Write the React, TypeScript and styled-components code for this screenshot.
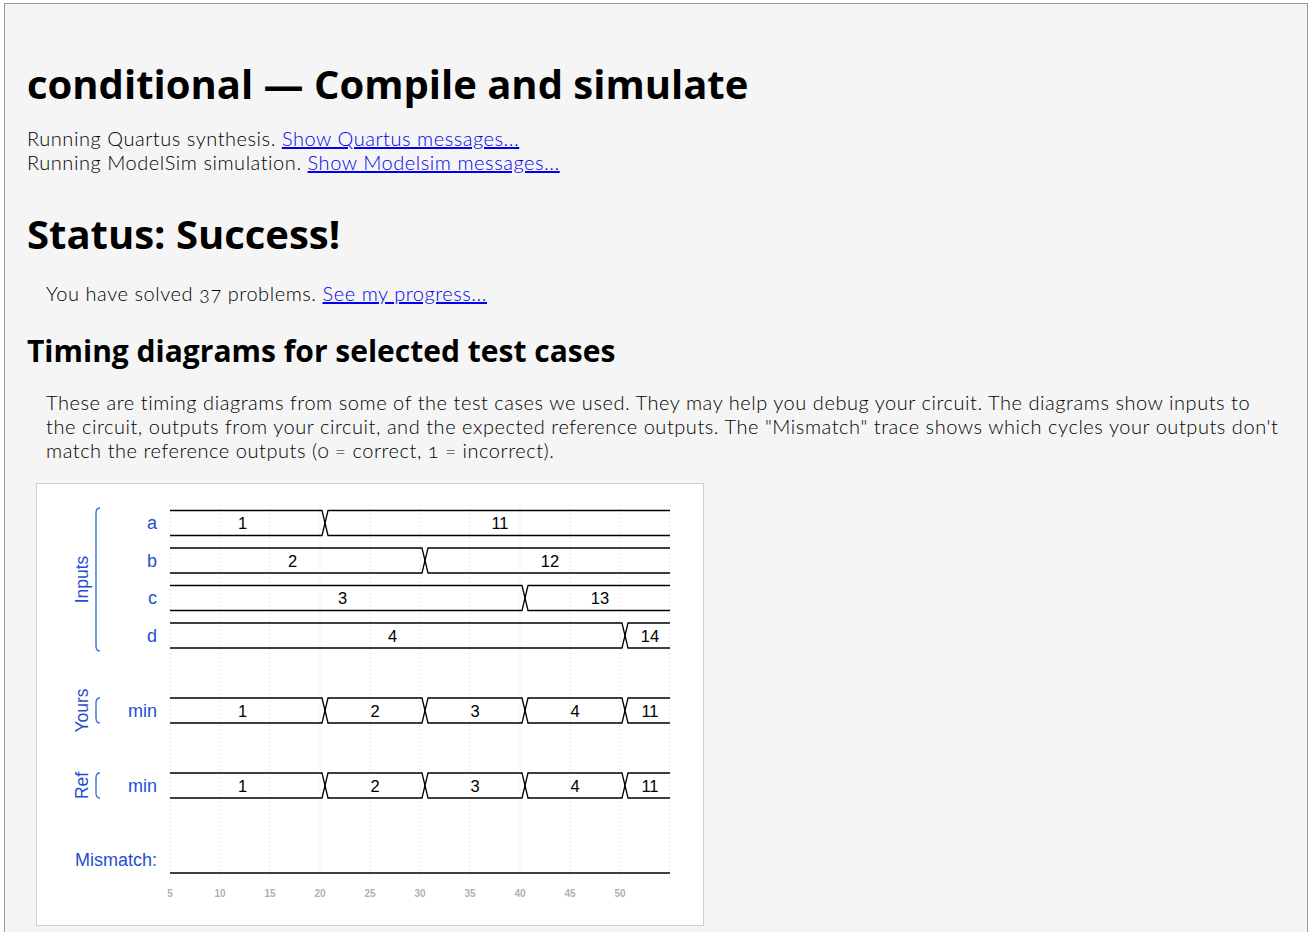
import styled, { createGlobalStyle } from 'styled-components'

const GlobalStyle = createGlobalStyle`
  body {
    margin: 0;
    background: #fff;
    font-family: Lato, "Open Sans", sans-serif;
  }
`

// diagram geometry, in page pixels of the card's inner box
const OX = 37
const OY = 484
const T0 = 5
const PX_PER_T = 10
const X_START = 170
const tx = (t: number) => X_START + (t - T0) * PX_PER_T - OX
const ly = (y: number) => y - OY

type Seg = { to: number | null, label: string }

interface Trace {
  name: string
  y: number
  segs: Seg[]
}

const inputs: Trace[] = [
  { name: 'a', y: 523, segs: [{ to: 20.5, label: '1' }, { to: null, label: '11' }] },
  { name: 'b', y: 560.5, segs: [{ to: 30.5, label: '2' }, { to: null, label: '12' }] },
  { name: 'c', y: 598, segs: [{ to: 40.5, label: '3' }, { to: null, label: '13' }] },
  { name: 'd', y: 635.5, segs: [{ to: 50.5, label: '4' }, { to: null, label: '14' }] }
]

const minSegs: Seg[] = [
  { to: 20.5, label: '1' },
  { to: 30.5, label: '2' },
  { to: 40.5, label: '3' },
  { to: 50.5, label: '4' },
  { to: null, label: '11' }
]

const yours: Trace = { name: 'min', y: 710.5, segs: minSegs }
const ref: Trace = { name: 'min', y: 785.5, segs: minSegs }

function Bus ({ trace }: { trace: Trace }) {
  const h = 12.5
  const top = ly(trace.y) - h
  const bot = ly(trace.y) + h
  const mid = ly(trace.y)
  const d = 3
  let from: number | null = null
  const parts: JSX.Element[] = []
  trace.segs.forEach((s, i) => {
    const xs = from === null ? tx(T0) : tx(from)
    const xe = s.to === null ? tx(55) : tx(s.to)
    // the first and last values run on past the visible window
    const vs = from === null ? tx(4) : xs
    const ve = s.to === null ? tx(55.5) : xe
    const sl = from === null ? 0 : d
    const sr = s.to === null ? 0 : d
    const pts = [
      `${xs},${mid}`,
      `${xs + sl},${top}`,
      `${xe - sr},${top}`,
      `${xe},${mid}`,
      `${xe - sr},${bot}`,
      `${xs + sl},${bot}`
    ]
    const path = from === null
      ? `M${xs},${top} L${pts[2]} L${pts[3]} L${pts[4]} L${xs},${bot}`
      : s.to === null
        ? `M${xe},${top} L${pts[1]} L${pts[0]} L${pts[5]} L${xe},${bot}`
        : `M${pts.join(' L')} Z`
    parts.push(
      <g key={i}>
        <path d={path} fill='none' stroke='#000' strokeWidth={1.3} />
        <ValueText x={(vs + ve) / 2} y={mid + 6}>{s.label}</ValueText>
      </g>
    )
    from = s.to
  })
  return (
    <g>
      <TraceName x={157 - OX} y={mid + 6}>{trace.name}</TraceName>
      {parts}
    </g>
  )
}

function Bracket ({ y1, y2, label }: { y1: number, y2: number, label: string }) {
  const a = ly(y1)
  const b = ly(y2)
  const x = 96 - OX
  return (
    <g>
      <path
        d={`M${x + 4},${a} Q${x},${a} ${x},${a + 5} L${x},${b - 5} Q${x},${b} ${x + 4},${b}`}
        fill='none'
        stroke='#3a6fd8'
        strokeWidth={1.4}
      />
      <GroupText transform={`translate(${82 - OX},${(a + b) / 2}) rotate(-90)`}>{label}</GroupText>
    </g>
  )
}

function TimingDiagram () {
  const ticks = [5, 10, 15, 20, 25, 30, 35, 40, 45, 50, 55]
  return (
    <DiagramCard>
      <svg width={666} height={441} viewBox='0 0 666 441'>
        {ticks.map(t => (
          <line
            key={t}
            x1={tx(t)}
            x2={tx(t)}
            y1={ly(505)}
            y2={ly(880)}
            stroke='#cfcfcf'
            strokeDasharray='1 3'
          />
        ))}
        <Bracket y1={508} y2={651} label='Inputs' />
        <Bracket y1={698} y2={723} label='Yours' />
        <Bracket y1={773} y2={798} label='Ref' />
        {inputs.map(tr => <Bus key={tr.name} trace={tr} />)}
        <Bus trace={yours} />
        <Bus trace={ref} />
        <TraceName x={157 - OX} y={ly(866)}>Mismatch:</TraceName>
        <line x1={tx(5)} x2={tx(55)} y1={ly(873)} y2={ly(873)} stroke='#000' strokeWidth={1.3} />
        {ticks.slice(0, 10).map(t => (
          <AxisText key={t} x={tx(t)} y={ly(897)}>{t}</AxisText>
        ))}
      </svg>
    </DiagramCard>
  )
}

export default function App () {
  return (
    <>
      <GlobalStyle />
      <Page>
        <Title>conditional — Compile and simulate</Title>
        <Log>
          Running Quartus synthesis. <Link href='#'>Show Quartus messages...</Link><br />
          Running ModelSim simulation. <Link href='#'>Show Modelsim messages...</Link>
        </Log>
        <Status>Status: Success!</Status>
        <Indented $top={20}>
          You have solved 37 problems. <Link href='#'>See my progress...</Link>
        </Indented>
        <Section>Timing diagrams for selected test cases</Section>
        <Indented $top={19}>
          These are timing diagrams from some of the test cases we used. They may help you debug your circuit. The diagrams show inputs to the circuit, outputs from your circuit, and the expected reference outputs. The "Mismatch" trace shows which cycles your outputs don't match the reference outputs (0 = correct, 1 = incorrect).
        </Indented>
        <TimingDiagram />
      </Page>
    </>
  )
}

const Page = styled.div`
  margin: 3px 4px 0;
  border: 1px solid #999;
  border-bottom: none;
  background: #f5f5f5;
  padding: 0 22px 24px;
  min-height: 960px;
  color: #000;
`

const Heading = styled.h1`
  font-family: "Open Sans", sans-serif;
  font-weight: 700;
  margin: 0;
  line-height: normal;
`

const Title = styled(Heading)`
  font-size: 40px;
  padding-top: 52px;
`

const Status = styled(Heading)`
  font-size: 40px;
  margin-top: 32px;
`

const Section = styled(Heading)`
  font-size: 30px;
  margin-top: 25px;
`

const Log = styled.p`
  margin: 15px 0 0;
  font-size: 20px;
  line-height: 24px;
  font-weight: 300;
  letter-spacing: 0.55px;
  font-variant-numeric: oldstyle-nums;
`

const Indented = styled.p<{ $top: number }>`
  margin: ${p => p.$top}px 0 0 19px;
  font-size: 20px;
  line-height: 24px;
  font-weight: 300;
  letter-spacing: 0.55px;
  font-variant-numeric: oldstyle-nums;
`

const Link = styled.a`
  color: #0000ee;
  text-decoration: underline;
`

const DiagramCard = styled.div`
  margin: 21px 0 0 9px;
  width: 666px;
  height: 441px;
  border: 1px solid #d0d0d0;
  background: #fff;

  svg {
    display: block;
  }
`

const ValueText = styled.text`
  font-family: "Liberation Sans", Arial, sans-serif;
  font-size: 16.5px;
  fill: #000;
  text-anchor: middle;
`

const TraceName = styled.text`
  font-family: "Liberation Sans", Arial, sans-serif;
  font-size: 18px;
  fill: #1f4fd0;
  text-anchor: end;
`

const GroupText = styled.text`
  font-family: "Liberation Sans", Arial, sans-serif;
  font-size: 17.5px;
  fill: #1f4fd0;
  text-anchor: middle;
  dominant-baseline: central;
`

const AxisText = styled.text`
  font-family: "Liberation Sans", Arial, sans-serif;
  font-size: 10px;
  font-weight: 700;
  fill: #b0b0b0;
  text-anchor: middle;
`
